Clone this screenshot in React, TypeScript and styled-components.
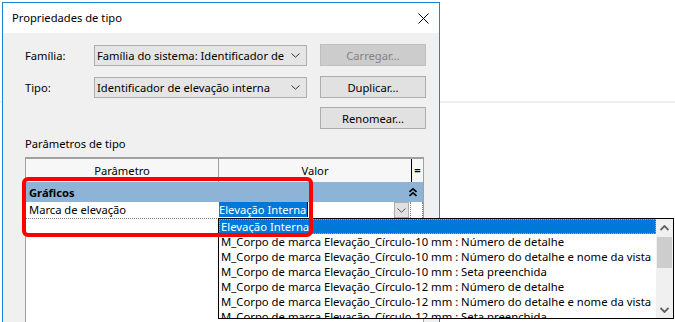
import React from "react";
import styled, { createGlobalStyle } from "styled-components";

const GlobalStyle = createGlobalStyle`
  html, body {
    margin: 0;
    padding: 0;
    background: #fff;
  }
  body {
    font-family: "Segoe UI", "Noto Sans", sans-serif;
    font-size: 11.2px;
    color: #000;
  }
`;

const listItems = [
  "Elevação Interna",
  "M_Corpo de marca Elevação_Círculo-10 mm : Número de detalhe",
  "M_Corpo de marca Elevação_Círculo-10 mm : Número do detalhe e nome da vista",
  "M_Corpo de marca Elevação_Círculo-10 mm : Seta preenchida",
  "M_Corpo de marca Elevação_Círculo-12 mm : Número de detalhe",
  "M_Corpo de marca Elevação_Círculo-12 mm : Número do detalhe e nome da vista",
  "M_Corpo de marca Elevação_Círculo-12 mm : Seta preenchida",
];

function Chevron({ color = "#333" }: { color?: string }) {
  return (
    <svg width="9" height="5" viewBox="0 0 9 5">
      <path d="M0.5 0.5 L4.5 4.2 L8.5 0.5" fill="none" stroke={color} strokeWidth="1" />
    </svg>
  );
}

export default function App() {
  return (
    <>
      <GlobalStyle />
      <Desktop>
        <BackArea />

        <Dialog>
          <TitleBar>
            <Title>Propriedades de tipo</Title>
            <CloseBtn>
              <svg width="11" height="11" viewBox="0 0 11 11">
                <path d="M0.5 0.5 L10.5 10.5 M10.5 0.5 L0.5 10.5" stroke="#000" strokeWidth="1" />
              </svg>
            </CloseBtn>
          </TitleBar>

          <Body>
            <FieldRow>
              <Label>Família:</Label>
              <Combo>
                <ComboText>Família do sistema: Identificador de elevação interna</ComboText>
                <Chevron />
              </Combo>
              <Button disabled>Carregar...</Button>
            </FieldRow>

            <FieldRow $top={10}>
              <Label>Tipo:</Label>
              <Combo>
                <ComboText>Identificador de elevação interna</ComboText>
                <Chevron />
              </Combo>
              <Button>Duplicar...</Button>
            </FieldRow>

            <FieldRow $top={9}>
              <Label />
              <ComboSpacer />
              <Button>Renomear...</Button>
            </FieldRow>

            <SectionLabel>Parâmetros de tipo</SectionLabel>

            <Grid>
              <HeaderRow>
                <HeadCell>Parâmetro</HeadCell>
                <HeadCell>Valor</HeadCell>
                <EqCell>=</EqCell>
              </HeaderRow>

              <GroupRow>
                <GroupTitle>Gráficos</GroupTitle>
                <GroupToggle>
                  <svg width="8" height="9" viewBox="0 0 8 9">
                    <path d="M0.5 4 L4 0.8 L7.5 4 M0.5 8 L4 4.8 L7.5 8" fill="none" stroke="#000" strokeWidth="1.6" />
                  </svg>
                </GroupToggle>
              </GroupRow>

              <ParamRow>
                <ParamName>Marca de elevação</ParamName>
                <ParamValue>
                  <Selected>Elevação Interna</Selected>
                  <DropBtn>
                    <Chevron color="#555" />
                  </DropBtn>
                </ParamValue>
                <DottedCell />
              </ParamRow>
            </Grid>
          </Body>
        </Dialog>

        <DropList>
          <Items>
            {listItems.map((item, i) => (
              <Item key={i} $active={i === 0}>
                {item}
              </Item>
            ))}
          </Items>
          <ScrollBar>
            <ScrollArrow>
              <svg width="9" height="6" viewBox="0 0 9 6">
                <path d="M0.5 5 L4.5 1 L8.5 5" fill="none" stroke="#606060" strokeWidth="1.8" />
              </svg>
            </ScrollArrow>
            <Thumb />
            <ScrollTrack />
            <ScrollArrow>
              <svg width="9" height="6" viewBox="0 0 9 6">
                <path d="M0.5 1 L4.5 5 L8.5 1" fill="none" stroke="#606060" strokeWidth="1.8" />
              </svg>
            </ScrollArrow>
          </ScrollBar>
        </DropList>

        <Highlight />
      </Desktop>
    </>
  );
}

const Desktop = styled.div`
  position: relative;
  width: 675px;
  height: 322px;
  overflow: hidden;
  background: #fff;
`;

const BackArea = styled.div`
  height: 101px;
  border-bottom: 2px solid #f0f0f0;
`;

const Dialog = styled.div`
  position: absolute;
  left: 2px;
  top: 2px;
  width: 438px;
  height: 340px;
  box-sizing: border-box;
  border: 1px solid #1883d7;
  background: #f0f0f0;
  display: flex;
  flex-direction: column;
`;

const TitleBar = styled.div`
  height: 30px;
  background: #fff;
  display: flex;
  align-items: center;
  justify-content: space-between;
  padding-left: 9px;
  padding-right: 10px;
`;

const Title = styled.span`
  font-size: 11.2px;
  padding-bottom: 1px;
`;

const CloseBtn = styled.div`
  display: flex;
  align-items: center;
  justify-content: center;
  width: 11px;
  height: 11px;
  margin-top: 1px;
`;

const Body = styled.div`
  flex: 1;
  display: flex;
  flex-direction: column;
  padding: 11px 0 0 22px;
`;

const FieldRow = styled.div<{ $top?: number }>`
  display: flex;
  align-items: center;
  height: 22px;
  margin-top: ${(p) => p.$top ?? 0}px;
`;

const Label = styled.div`
  width: 69px;
  flex-shrink: 0;
`;

const Combo = styled.div`
  width: 213px;
  height: 21px;
  box-sizing: border-box;
  border: 1px solid #adadad;
  background: #e5e5e5;
  display: flex;
  align-items: center;
  padding: 0 6px 0 2px;
  margin-right: 13px;
  overflow: hidden;
`;

const ComboSpacer = styled.div`
  width: 213px;
  margin-right: 13px;
`;

const ComboText = styled.span`
  flex: 1;
  min-width: 0;
  overflow: hidden;
  white-space: nowrap;
  margin-right: 7px;
`;

const Button = styled.button`
  width: 106px;
  height: 22px;
  box-sizing: border-box;
  border: 1px solid #adadad;
  background: #e1e1e1;
  font-family: inherit;
  font-size: 11.2px;
  color: #000;
  padding: 0;

  &:disabled {
    background: #cccccc;
    border-color: #bfbfbf;
    color: #838383;
  }
`;

const SectionLabel = styled.div`
  margin-top: 7px;
  height: 16px;
  line-height: 16px;
`;

const Grid = styled.div`
  margin-top: 5px;
  width: 399px;
  flex: 1;
  box-sizing: border-box;
  border-left: 1px solid #a0a0a0;
  border-right: 1px solid #a0a0a0;
  background: #fff;
`;

const HeaderRow = styled.div`
  display: grid;
  grid-template-columns: 193px 192px 12px;
  height: 25px;
  box-sizing: border-box;
  border-top: 2px solid #a0a0a0;
  background: #f7f7f7;
`;

const HeadCell = styled.div`
  display: flex;
  align-items: center;
  justify-content: center;
  &:first-child {
    border-right: 1px solid #a0a0a0;
  }
`;

const EqCell = styled.div`
  display: flex;
  align-items: center;
  justify-content: center;
  border-left: 1px solid #000;
  font-weight: bold;
  padding-bottom: 2px;
`;

const GroupRow = styled.div`
  height: 20px;
  background: #8db4d7;
  display: flex;
  align-items: center;
  justify-content: space-between;
`;

const GroupTitle = styled.span`
  font-weight: bold;
  padding-left: 3px;
`;

const GroupToggle = styled.span`
  display: flex;
  width: 12px;
  padding-right: 2px;
`;

const ParamRow = styled.div`
  display: grid;
  grid-template-columns: 193px 192px 12px;
  height: 17px;
  box-sizing: border-box;
  border-bottom: 1px dotted #808080;
`;

const ParamName = styled.div`
  padding-left: 3px;
  line-height: 16px;
`;

const ParamValue = styled.div`
  display: flex;
  align-items: flex-start;
  justify-content: space-between;
  padding-right: 1px;
  border-right: 1px dotted #808080;
`;

const Selected = styled.span`
  background: #0078d7;
  color: #fff;
  line-height: 15px;
  padding-right: 1px;
  border-right: 1px solid #000;
`;

const DropBtn = styled.div`
  width: 15px;
  height: 16px;
  box-sizing: border-box;
  border: 1px solid #adadad;
  background: #e1e1e1;
  display: flex;
  align-items: center;
  justify-content: center;
`;

const DottedCell = styled.div`
  border-right: 1px dotted #808080;
`;

const DropList = styled.div`
  position: absolute;
  left: 218px;
  top: 218px;
  width: 456px;
  height: 101px;
  box-sizing: border-box;
  border: 1px solid #000;
  background: #fff;
  display: flex;
  z-index: 5;
`;

const Items = styled.div`
  flex: 1;
  overflow: hidden;
  font-size: 11.3px;
`;

const Item = styled.div<{ $active?: boolean }>`
  height: 15px;
  line-height: 15px;
  padding-left: 2px;
  white-space: nowrap;
  box-sizing: border-box;
  background: ${(p) => (p.$active ? "#0078d7" : "transparent")};
  color: ${(p) => (p.$active ? "#fff" : "#000")};
  outline: ${(p) => (p.$active ? "1px dotted #f0a040" : "none")};
  outline-offset: -1px;
`;

const ScrollBar = styled.div`
  width: 17px;
  background: #f0f0f0;
  display: flex;
  flex-direction: column;
  align-items: center;
`;

const ScrollArrow = styled.div`
  height: 17px;
  width: 17px;
  display: flex;
  align-items: center;
  justify-content: center;
`;

const Thumb = styled.div`
  width: 15px;
  height: 31px;
  margin-top: 1px;
  background: #cdcdcd;
`;

const ScrollTrack = styled.div`
  flex: 1;
`;

const Highlight = styled.div`
  position: absolute;
  left: 22px;
  top: 177px;
  width: 291px;
  height: 60px;
  box-sizing: border-box;
  border: 4px solid #ff0000;
  border-radius: 6px;
  z-index: 10;
  pointer-events: none;
`;
